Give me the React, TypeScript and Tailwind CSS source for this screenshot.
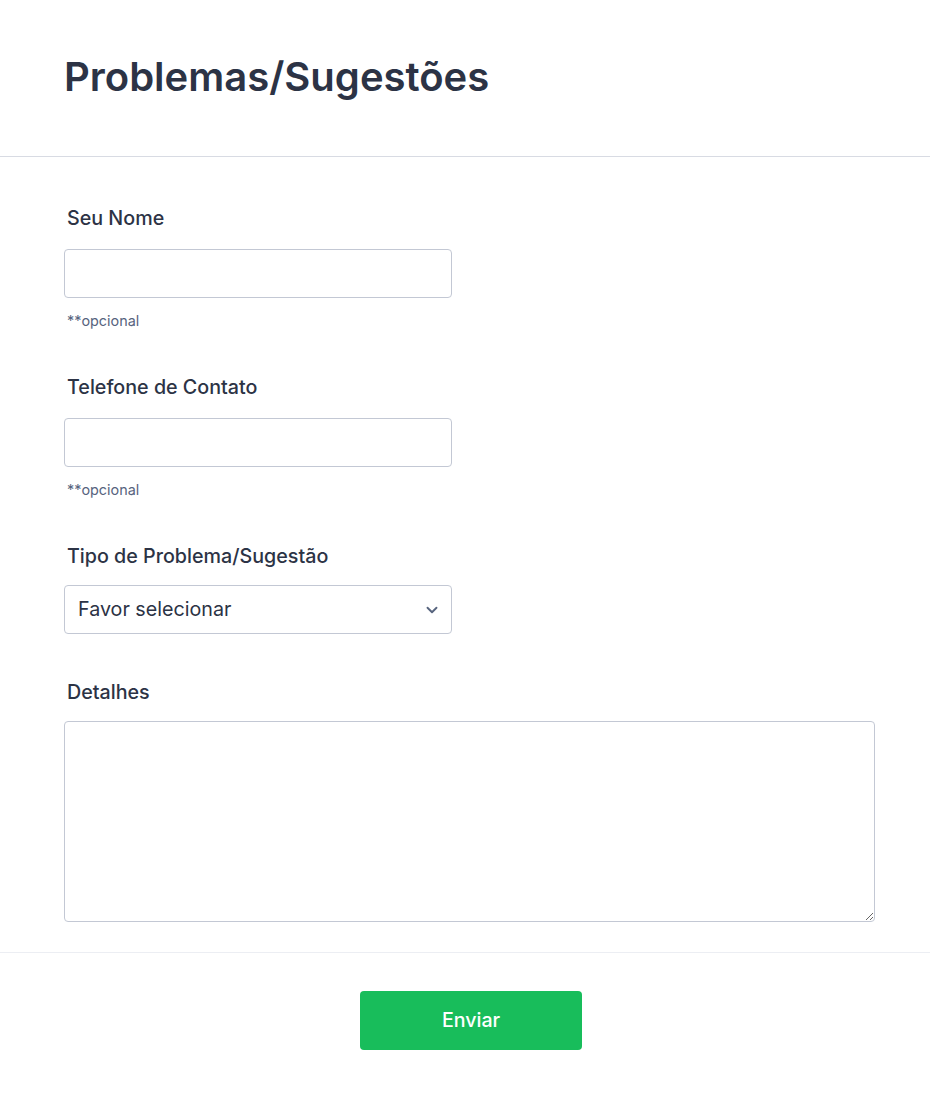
import { ChevronDown } from "lucide-react";

const font = { fontFamily: "Inter, 'Noto Sans', sans-serif" };

export default function App() {
  return (
    <div className="min-h-[1099px] bg-white text-[#2c3345]" style={font}>
      <header className="border-b border-[#d8dbe3] px-16 pt-[53px] pb-[55px]">
        <h1 className="text-[40px] font-semibold leading-[48px] text-[#2c3345]">
          Problemas/Sugestões
        </h1>
      </header>

      <form className="flex flex-col">
        <div className="flex flex-col gap-12 pl-16 pr-[55px] pt-[51px] pb-[30px]">
          <TextField label="Seu Nome" hint="**opcional" />
          <TextField label="Telefone de Contato" hint="**opcional" />

          <div>
            <FieldLabel>Tipo de Problema/Sugestão</FieldLabel>
            <div className="relative mt-[19px] w-[388px]">
              <select
                defaultValue=""
                className="h-[49px] w-full appearance-none rounded-[4px] border border-[#c3c8d4] bg-white pl-[13px] pr-10 text-[19.7px] text-[#2c3345] outline-none"
              >
                <option value="">Favor selecionar</option>
                <option>Problema</option>
                <option>Sugestão</option>
              </select>
              <ChevronDown
                className="pointer-events-none absolute right-[11px] top-[16px] h-[18px] w-[18px] text-[#57647e]"
                strokeWidth={2.5}
              />
            </div>
          </div>

          <div>
            <FieldLabel>Detalhes</FieldLabel>
            <textarea className="mt-[19px] block h-[201px] w-full rounded-[4px] border border-[#c3c8d4] bg-white px-[13px] py-2 text-[16px] outline-none" />
          </div>
        </div>

        <div className="flex justify-center border-t border-[#eceef3] pl-3 pt-[38px] pb-[49px]">
          <button
            type="button"
            className="h-[59px] w-[222px] rounded-[4px] bg-[#18bd5b] text-[19.6px] font-medium text-white"
          >
            Enviar
          </button>
        </div>
      </form>
    </div>
  );
}

function FieldLabel({ children }: { children: string }) {
  return (
    <label className="block pl-[3px] text-[19.7px] font-medium leading-5 text-[#2c3345]">
      {children}
    </label>
  );
}

function TextField({ label, hint }: { label: string; hint: string }) {
  return (
    <div>
      <FieldLabel>{label}</FieldLabel>
      <input
        type="text"
        className="mt-[21px] block h-[49px] w-[388px] rounded-[4px] border border-[#c3c8d4] bg-white px-[13px] text-[16px] outline-none"
      />
      <div className="mt-[15px] pl-[3px] text-[14.4px] leading-4 text-[#57647e]">{hint}</div>
    </div>
  );
}
